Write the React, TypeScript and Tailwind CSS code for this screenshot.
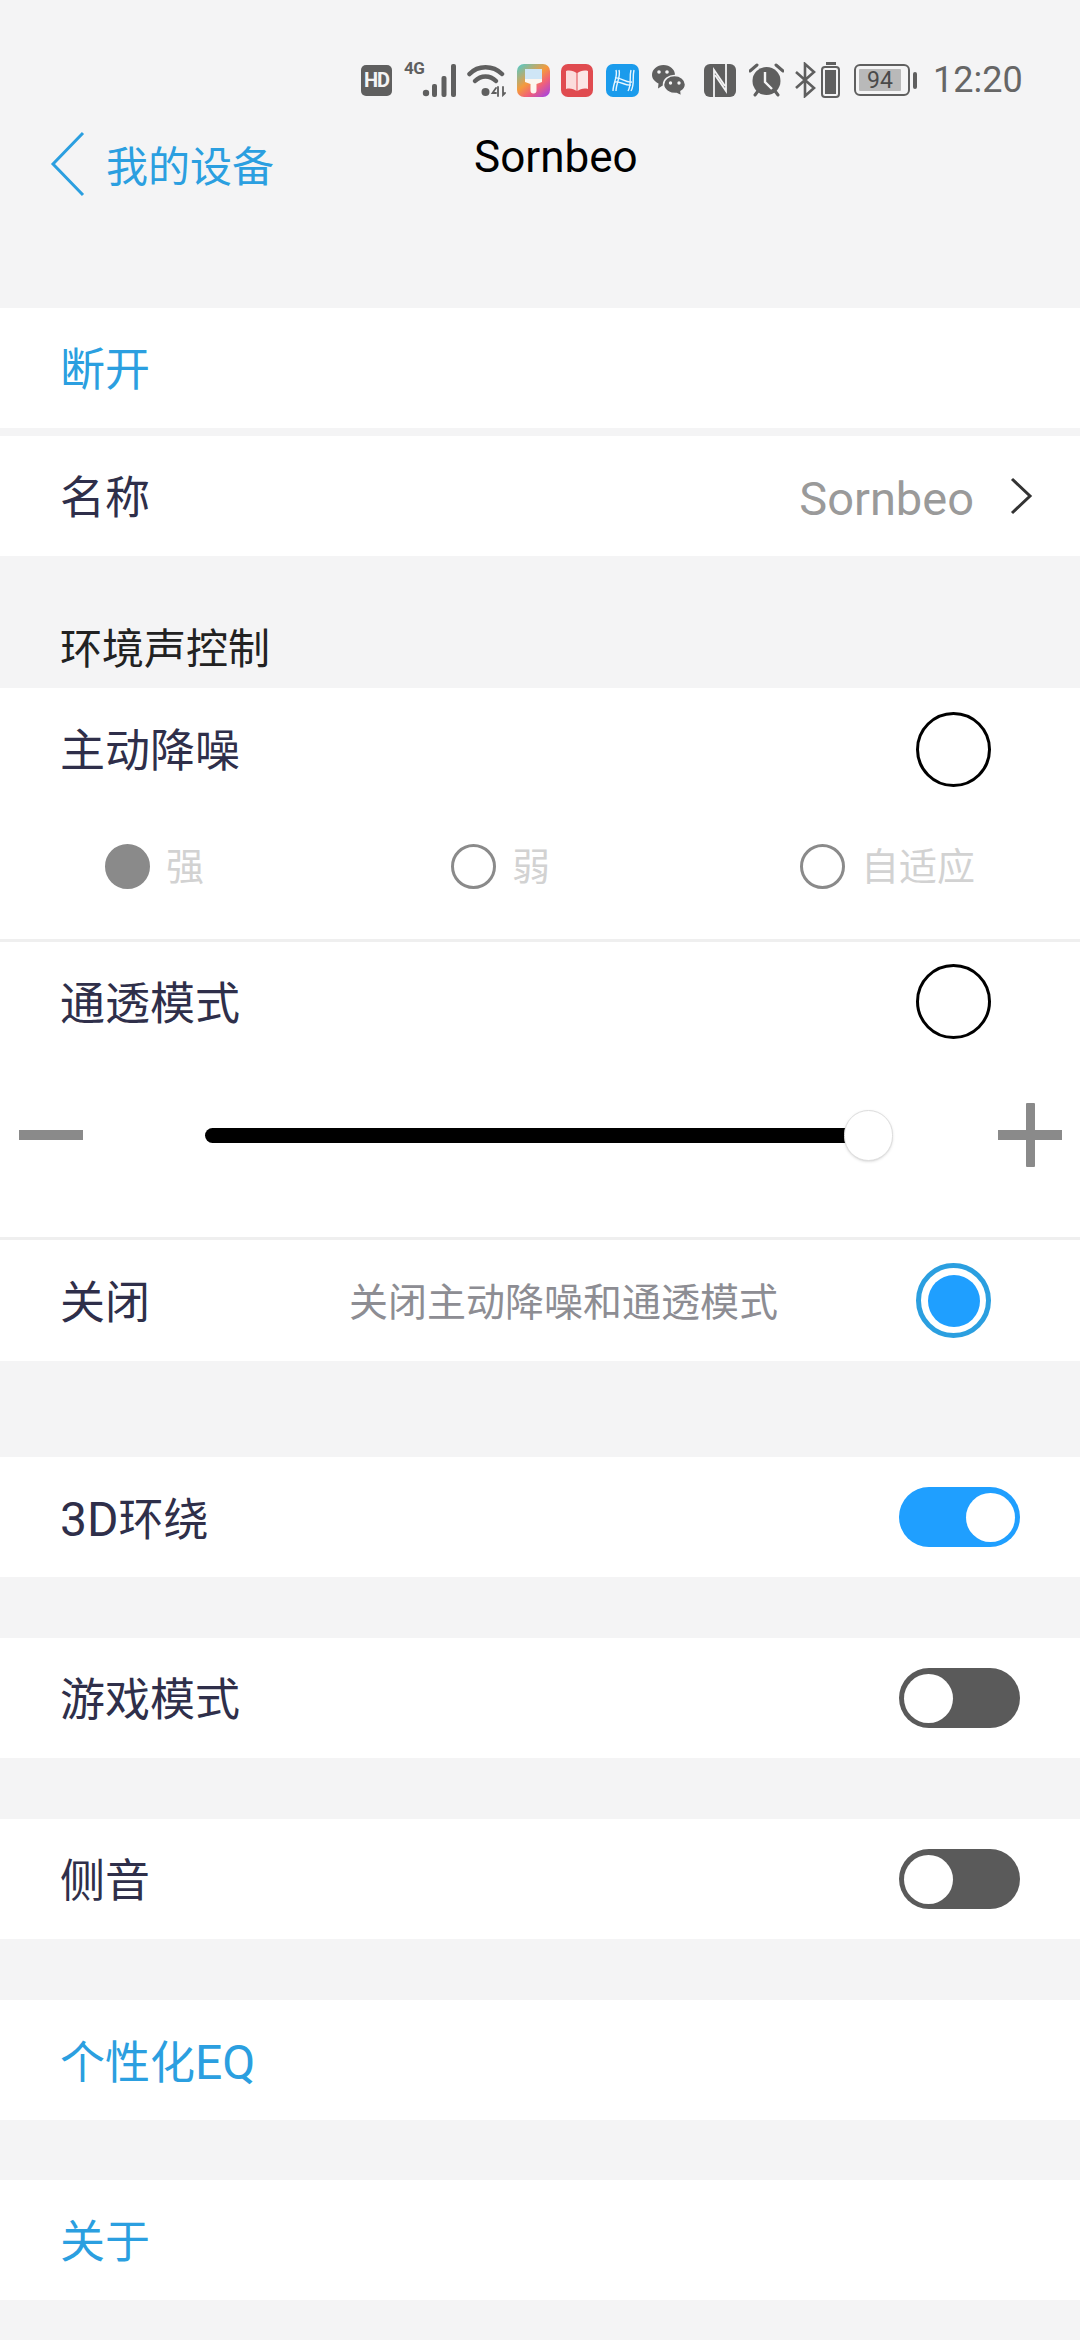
const Hd = () => (
  <div className="w-[31px] h-[31px] rounded-[5px] bg-[#5f5f5f] flex items-center justify-center text-[20px] font-bold leading-none text-[#f4f4f5] tracking-[-1px]">
    HD
  </div>
);

const Signal = () => (
  <div className="relative w-[54px] h-[34px] ml-[12px]">
    <span className="absolute left-0 top-[-4px] text-[17px] font-bold leading-[18px] text-[#5f5f5f] tracking-[-0.5px]">4G</span>
    <svg className="absolute left-[18px] top-0" width="36" height="34" viewBox="0 0 36 34" fill="#5f5f5f">
      <circle cx="4" cy="30" r="3.2" />
      <rect x="10" y="21" width="5" height="13" rx="2" />
      <rect x="19.5" y="13" width="5" height="21" rx="2" />
      <rect x="29" y="1" width="5" height="33" rx="2" />
    </svg>
  </div>
);

const Wifi = () => (
  <svg className="ml-[9px]" width="39" height="34" viewBox="0 0 39 34" fill="none" stroke="#5f5f5f" strokeLinecap="round">
    <path d="M2.5 11 C11 2 26 2 35 11" strokeWidth="4.5" />
    <path d="M8 18 C14 12 23 12 29 18" strokeWidth="4.5" />
    <circle cx="18.5" cy="29" r="4" fill="#5f5f5f" stroke="none" />
    <path d="M31 24 V33 M29 30 h-3.5 l3.5 -5 M36 24 V32 l2 -2" strokeWidth="1.8" />
  </svg>
);

const PaintApp = () => (
  <svg className="ml-[11px]" width="33" height="33" viewBox="0 0 33 33">
    <defs>
      <linearGradient id="paintBg" x1="0.1" y1="0" x2="0.9" y2="1">
        <stop offset="0" stopColor="#5cc7c0" />
        <stop offset="0.45" stopColor="#f59a3c" />
        <stop offset="0.7" stopColor="#f0607a" />
        <stop offset="1" stopColor="#a644e0" />
      </linearGradient>
    </defs>
    <rect width="33" height="33" rx="7" fill="url(#paintBg)" />
    <rect x="8" y="5" width="17" height="10" fill="#cfe6f6" />
    <path d="M8 15 h17 v3 l-5.5 2 v6.5 a3 3 0 0 1 -6 0 v-6.5 l-5.5 -2 z" fill="#fdf6ee" />
  </svg>
);

const BookApp = () => (
  <svg className="ml-[11px]" width="32" height="33" viewBox="0 0 32 33">
    <rect width="32" height="33" rx="7" fill="#e04b50" />
    <path d="M5 7 C9 6 13 7 15.5 9 V27 C13 25 9 24 5 25 z" fill="#fbdcdc" />
    <path d="M27 7 C23 6 19 7 16.5 9 V27 C19 25 23 24 27 25 z" fill="#fbe6e6" />
  </svg>
);

const HApp = () => (
  <svg className="ml-[13px]" width="33" height="33" viewBox="0 0 33 33" fill="none" stroke="#e8f6ff" strokeWidth="1.4">
    <rect width="33" height="33" rx="7" fill="#1a9bec" stroke="none" />
    <path d="M10 6 C12 12 7 20 7 27 M13 6 C15 12 10 20 10 27 M25 6 C23 14 26 20 22 27 M28 6 C26 14 29 20 25 27" />
    <path d="M9 14 C15 13 19 19 26 18 M9 18 C15 17 19 22 25 21" />
  </svg>
);

const Wechat = () => (
  <svg className="ml-[12px]" width="35" height="33" viewBox="0 0 35 33">
    <path d="M12.5 1 C19 1 24 5.5 24 11 C24 16.5 19 21 12.5 21 L7 24.5 L7.5 19.5 C3.5 17.5 1 14.5 1 11 C1 5.5 6 1 12.5 1 Z" fill="#5f5f5f" />
    <path d="M23.5 11.5 C29.5 11.5 34.5 15.5 34.5 20.5 C34.5 23.5 32.5 26 30 27.5 L30.5 32 L25.5 29.5 C19 30 12.5 26 12.5 20.5 C12.5 15.5 17.5 11.5 23.5 11.5 Z" fill="#5f5f5f" stroke="#f4f4f5" strokeWidth="1.5" />
    <circle cx="8" cy="8" r="1.8" fill="#f4f4f5" />
    <circle cx="16" cy="8" r="1.8" fill="#f4f4f5" />
    <circle cx="19.5" cy="19" r="1.7" fill="#f4f4f5" />
    <circle cx="28" cy="19" r="1.7" fill="#f4f4f5" />
  </svg>
);

const Nfc = () => (
  <svg className="ml-[18px]" width="32" height="33" viewBox="0 0 32 33">
    <rect width="32" height="33" rx="6" fill="#5f5f5f" />
    <path d="M10 33 V6 L21 22 M22 0 V27 L11 11" fill="none" stroke="#f4f4f5" strokeWidth="1.8" />
  </svg>
);

const Alarm = () => (
  <svg className="ml-[13px]" width="35" height="34" viewBox="0 0 35 34">
    <circle cx="17.5" cy="18" r="14" fill="#5f5f5f" />
    <path d="M16 9 V19 L23 26" fill="none" stroke="#f4f4f5" strokeWidth="2.4" />
    <path d="M1 8 L8 2 M34 8 L27 2 M6 32 L9 28 M29 32 L26 28" stroke="#5f5f5f" strokeWidth="3" strokeLinecap="round" />
  </svg>
);

const Bluetooth = () => (
  <svg className="ml-[11px]" width="21" height="36" viewBox="0 0 21 36" fill="none" stroke="#5f5f5f" strokeWidth="2.6">
    <path d="M1 10 L19 26 L10 34 V2 L19 10 L1 26" />
  </svg>
);

const SmallBattery = () => (
  <div className="ml-[5px] w-[19px] h-[36px] flex flex-col items-center">
    <div className="w-[10px] h-[3px] bg-[#5f5f5f]" />
    <div className="mt-[1px] w-[19px] h-[32px] rounded-[4px] border-[2.5px] border-[#5f5f5f] p-[2px]">
      <div className="w-full h-full bg-[#5f5f5f]" />
    </div>
  </div>
);

const Battery = () => (
  <div className="ml-[14px] flex items-center">
    <div className="w-[56px] h-[32px] rounded-[6px] border-[2.5px] border-[#5f5f5f] p-[3px]">
      <div className="w-[42px] h-full rounded-[1px] bg-[#b9b9b9] flex items-center justify-center text-[23px] leading-none text-[#4a4a4a]">
        94
      </div>
    </div>
    <div className="ml-[3px] w-[4px] h-[17px] rounded-[2px] bg-[#5f5f5f]" />
  </div>
);

const StatusBar = () => (
  <div className="h-[160px] flex items-center justify-end pr-[60px]">
    <Hd />
    <Signal />
    <Wifi />
    <PaintApp />
    <BookApp />
    <HApp />
    <Wechat />
    <Nfc />
    <Alarm />
    <Bluetooth />
    <SmallBattery />
    <Battery />
    <span className="ml-[16px] w-[87px] text-[36px] leading-none text-[#666666]">12:20</span>
  </div>
);

const Header = () => (
  <div className="h-[177px] flex items-start -mt-[29px]">
    <svg className="ml-[50px]" width="36" height="66" viewBox="0 0 36 66" fill="none" stroke="#2b9fe0" strokeWidth="3">
      <path d="M33 2 L3 33 L33 64" />
    </svg>
    <span className="ml-[20px] mt-[9px] text-[42px] leading-[56px] text-[#2b9fe0]">我的设备</span>
    <span className="ml-[200px] mt-[-2px] text-[44px] leading-[56px] text-black">Sornbeo</span>
  </div>
);

// text in the rows sits a little under the row's centre line
const Label = ({ children, className = "" }: { children: React.ReactNode; className?: string }) => (
  <span className={`pt-[6px] ${className}`}>{children}</span>
);

const Row = ({ children, className = "" }: { children: React.ReactNode; className?: string }) => (
  <div className={`bg-white h-[120px] flex items-center pl-[60px] pr-[60px] ${className}`}>{children}</div>
);

const Toggle = ({ on }: { on?: boolean }) => (
  <div className={`ml-auto w-[121px] h-[60px] rounded-full flex items-center px-[5px] ${on ? "bg-[#1f9fff] justify-end" : "bg-[#5a5a5a] justify-start"}`}>
    <div className="w-[49px] h-[49px] rounded-full bg-white" />
  </div>
);

const BigRadio = () => (
  <div className="ml-auto mr-[29px] w-[75px] h-[75px] rounded-full border-[3px] border-black" />
);

const SubOption = ({ label, on, className = "" }: { label: string; on?: boolean; className?: string }) => (
  <div className={`flex items-center ${className}`}>
    <div className={`w-[45px] h-[45px] rounded-full border-[3px] border-[#8a8a8a] ${on ? "bg-[#8a8a8a]" : ""}`} />
    <span className="ml-[16px] pt-[2px] text-[38px] leading-none text-[#d2d2d2]">{label}</span>
  </div>
);

export default function App() {
  return (
    <div className="w-[1080px] h-[2340px] overflow-hidden bg-[#f4f4f5] font-['Roboto','Noto_Sans_CJK_SC',sans-serif] text-[45px] text-[#2f2f4a]">
      <StatusBar />
      <Header />
      <Row className="text-[#2b9fe0]">
        <Label>断开</Label>
      </Row>
      <Row className="mt-[8px] !pr-[47px]">
        <Label>名称</Label>
        <Label className="ml-auto text-[47px] text-[#9a9a9a]">Sornbeo</Label>
        <svg className="ml-[35px]" width="24" height="38" viewBox="0 0 24 38" fill="none" stroke="#333333" strokeWidth="3">
          <path d="M3 2 L21 19 L3 36" />
        </svg>
      </Row>

      <div className="h-[132px] pl-[60px] pt-[66px] text-[42px] leading-[56px] text-[#222222]">环境声控制</div>

      <div className="bg-white">
        <div className="h-[122px] flex items-center pl-[60px] pr-[60px]">
          <Label>主动降噪</Label>
          <BigRadio />
        </div>
        <div className="h-[112px] flex items-center">
          <SubOption label="强" on className="ml-[105px]" />
          <SubOption label="弱" className="ml-[247px]" />
          <SubOption label="自适应" className="ml-[250px]" />
        </div>
        <div className="h-[17px]" />
        <div className="h-[3px] bg-[#efefef]" />
        <div className="h-[118px] flex items-center pl-[60px] pr-[60px]">
          <Label className="pt-[8px]">通透模式</Label>
          <BigRadio />
        </div>
        <div className="h-[150px] flex items-center pl-[19px]">
          <div className="w-[64px] h-[10px] bg-[#8a8a8a]" />
          <div className="ml-[122px] w-[640px] h-[15px] rounded-l-full bg-black" />
          <div className="-ml-[1px] w-[49px] h-[51px] rounded-full bg-white border border-[#dddddd] shadow-sm" />
          <svg className="ml-[105px]" width="64" height="64" viewBox="0 0 64 64" fill="#8a8a8a">
            <rect x="0" y="27" width="64" height="10" />
            <rect x="28" y="0" width="9" height="64" rx="1" />
          </svg>
        </div>
        <div className="h-[27px]" />
        <div className="h-[3px] bg-[#efefef]" />
        <div className="h-[121px] flex items-center pl-[60px] pr-[60px]">
          <Label className="pt-[4px]">关闭</Label>
          <Label className="ml-[199px] pt-[4px] text-[39px] text-[#8d8d93]">关闭主动降噪和通透模式</Label>
          <div className="ml-auto mr-[29px] w-[75px] h-[75px] rounded-full border-[5px] border-[#2b9fe0] flex items-center justify-center">
            <div className="w-[52px] h-[52px] rounded-full bg-[#1f9fff]" />
          </div>
        </div>
      </div>

      <Row className="mt-[96px]">
        <Label>
          <span className="text-[48px]">3D</span>环绕
        </Label>
        <Toggle on />
      </Row>
      <Row className="mt-[61px]">
        <Label>游戏模式</Label>
        <Toggle />
      </Row>
      <Row className="mt-[61px]">
        <Label>侧音</Label>
        <Toggle />
      </Row>
      <Row className="mt-[61px] text-[#2b9fe0]">
        <Label>
          个性化<span className="text-[48px]">EQ</span>
        </Label>
      </Row>
      <Row className="mt-[60px] text-[#2b9fe0]">
        <Label>关于</Label>
      </Row>
    </div>
  );
}
